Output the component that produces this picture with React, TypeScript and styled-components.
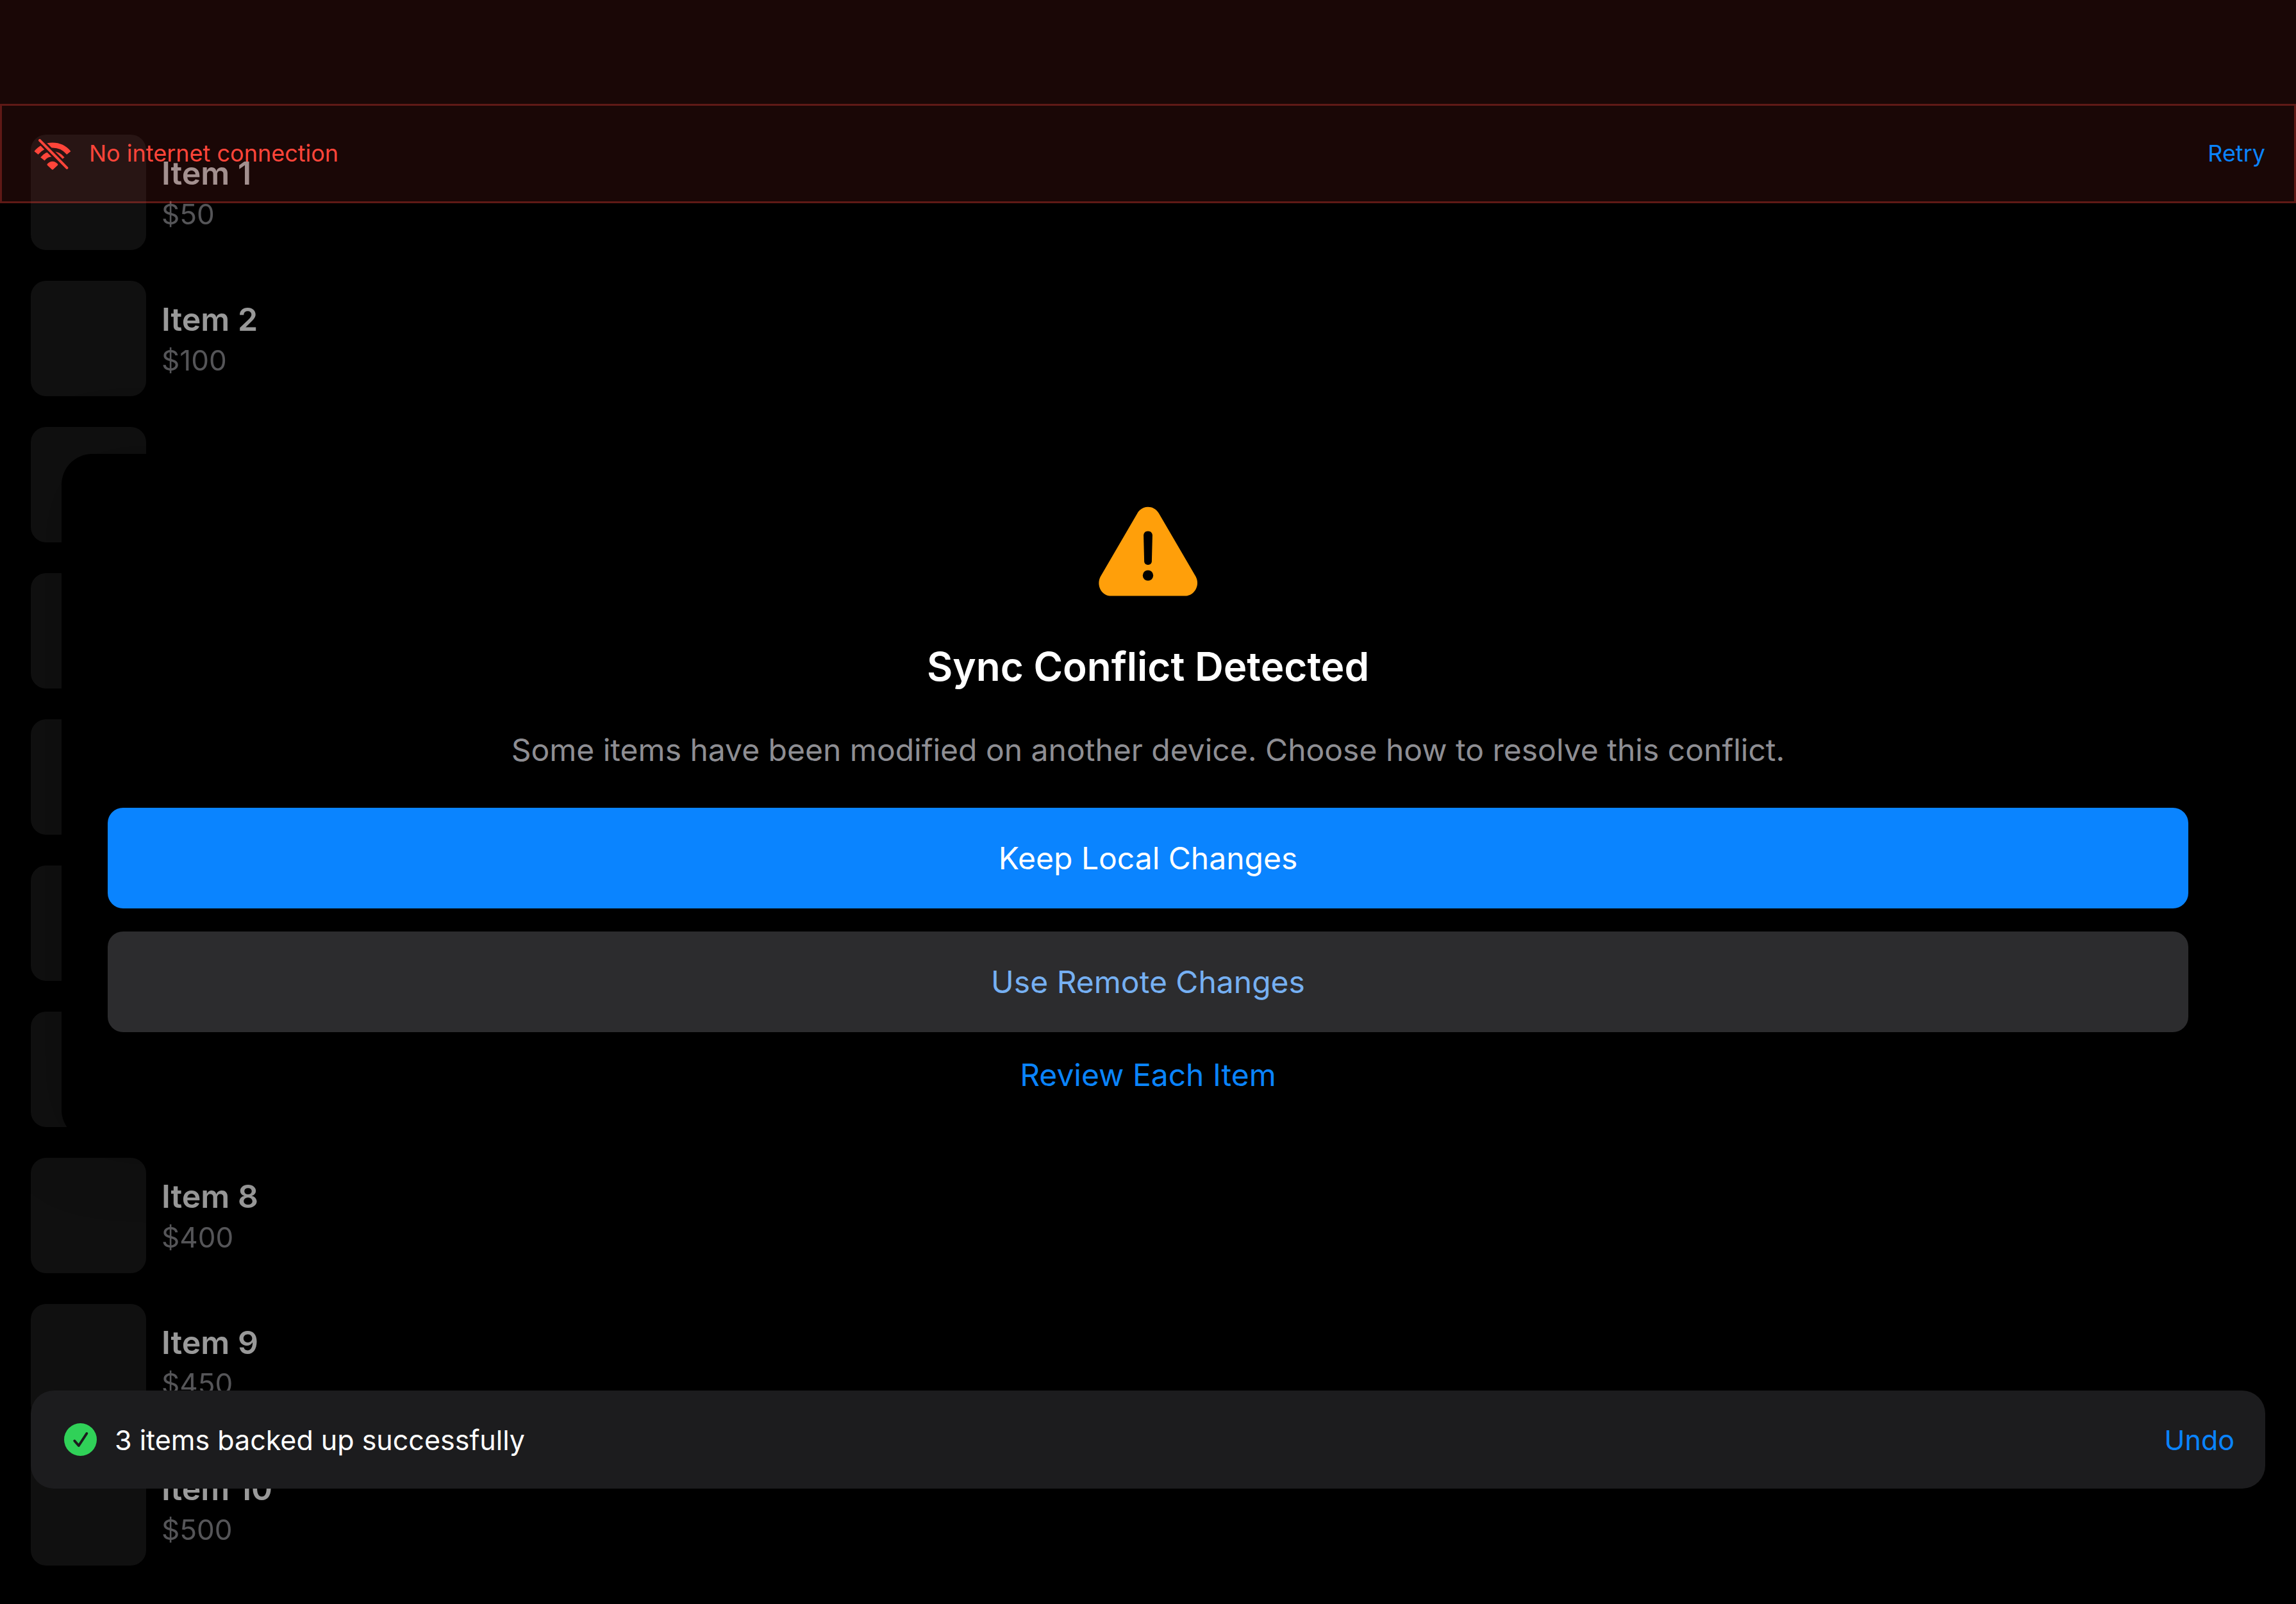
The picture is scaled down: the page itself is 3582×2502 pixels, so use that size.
import React from "react";
import styled, { createGlobalStyle } from "styled-components";

const color = {
  label: "#ffffff",
  secondary: "#8e8e93",
  placeholder: "#1c1c1c",
  fill: "#1c1c1e",
  fillRaised: "#2c2c2e",
  blue: "#0a84ff",
  blueSoft: "#76b0f2",
  red: "#ff453a",
  orange: "#ff9f0a",
  green: "#30d158",
};

const GlobalStyle = createGlobalStyle`
  * { box-sizing: border-box; }
  body {
    margin: 0;
    background: #000;
    color: ${color.label};
    font-family: Inter, "Liberation Sans", sans-serif;
  }
  button {
    margin: 0;
    padding: 0;
    border: 0;
    background: none;
    font: inherit;
    cursor: pointer;
  }
  h2, p, ul { margin: 0; padding: 0; }
  svg { display: block; flex: none; }
`;

const Page = styled.main`
  position: relative;
  min-height: 100vh;
  overflow: hidden;
`;

const ItemList = styled.ul`
  display: flex;
  flex-direction: column;
  gap: 48px;
  padding: 210px 48px 60px;
  list-style: none;
  opacity: 0.6;
`;

const ItemRow = styled.li`
  display: flex;
  align-items: center;
  gap: 24px;
`;

const Thumbnail = styled.div`
  width: 180px;
  height: 180px;
  border-radius: 24px;
  background: ${color.placeholder};
`;

const ItemText = styled.div`
  display: flex;
  flex-direction: column;
  gap: 6px;
`;

const ItemName = styled.p`
  font-size: 50px;
  line-height: 61px;
  font-weight: 600;
`;

const ItemPrice = styled.p`
  font-size: 44px;
  line-height: 54px;
  color: ${color.secondary};
`;

const OfflineBanner = styled.section`
  position: absolute;
  top: 0;
  left: 0;
  right: 0;
  padding-top: 162px;
  background: rgba(255, 69, 58, 0.1);
`;

const BannerRow = styled.div`
  display: flex;
  align-items: center;
  gap: 24px;
  padding: 45px;
  border: 3px solid rgba(255, 69, 58, 0.3);
  font-size: 36px;
  line-height: 45px;
  color: ${color.red};
`;

const RowLabel = styled.p`
  flex: 1;
`;

const LinkButton = styled.button`
  color: ${color.blue};
`;

const DialogLayer = styled.div`
  position: absolute;
  inset: 0;
  display: flex;
  align-items: center;
  padding: 0 96px 15px;
`;

const Dialog = styled.section`
  flex: 1;
  display: flex;
  flex-direction: column;
  align-items: center;
  gap: 60px;
  padding: 72px;
  border-radius: 48px;
  background: #000;
  box-shadow: 0 12px 120px rgba(0, 0, 0, 0.2);
`;

const DialogTitle = styled.h2`
  font-size: 62px;
  line-height: 79px;
  font-weight: 600;
`;

const DialogMessage = styled.p`
  font-size: 48px;
  line-height: 61px;
  color: ${color.secondary};
`;

const DialogActions = styled.div`
  align-self: stretch;
  display: flex;
  flex-direction: column;
  align-items: center;
  gap: 36px;
  font-size: 48px;
  line-height: 61px;
`;

const FilledButton = styled.button<{ $primary?: boolean }>`
  align-self: stretch;
  padding: 48px;
  border-radius: 24px;
  background: ${(p) => (p.$primary ? color.blue : color.fillRaised)};
  color: ${(p) => (p.$primary ? color.label : color.blueSoft)};
`;

const Toast = styled.section`
  position: absolute;
  left: 48px;
  right: 48px;
  bottom: 180px;
  display: flex;
  align-items: center;
  gap: 24px;
  padding: 48px;
  border-radius: 36px;
  background: ${color.fill};
  font-size: 43px;
  line-height: 54px;
`;

const WifiSlashIcon = () => (
  <svg width="67" height="59" viewBox="0 0 67 59" aria-hidden="true">
    <mask id="slash-gap" maskUnits="userSpaceOnUse" x="0" y="0" width="67" height="59">
      <rect width="67" height="59" fill="#fff" />
      <path d="M9 3.800 L61.400 56.800" stroke="#000" strokeWidth="10" />
    </mask>
    <g mask="url(#slash-gap)" fill="none" stroke={color.red} strokeWidth="8">
      <path d="M8.500 28.500 A33 33 0 0 1 59.300 28.500" />
      <path d="M18.400 38 A19.400 19.400 0 0 1 49.400 38" />
    </g>
    <path
      d="M26 45.600 C30.400 40.400 37.400 40.400 41.800 45.600 Q42.900 46.900 41.700 48 L35.200 54.100 Q33.900 55.200 32.600 54.100 L26.100 48 Q24.900 46.900 26 45.600 Z"
      fill={color.red}
    />
    <path d="M14 8.800 L56.400 51.800" stroke={color.red} strokeWidth="4" strokeLinecap="round" />
  </svg>
);

const WarningIcon = () => (
  <svg width="160" height="160" viewBox="0 0 160 160" aria-hidden="true">
    <path
      d="M63.500 20.500 C71 7.500 89 7.500 96.800 20.500 L154.600 119.500 C161.500 132.500 153 149.600 137.500 149.600 H22.500 C7 149.600 -1 132.500 5.800 119.500 Z"
      fill={color.orange}
    />
    <path
      d="M80 48.500 C84.200 48.500 87 51.300 86.900 55.500 L85.900 95.500 C85.800 98.900 83.400 101 80 101 C76.600 101 74.200 98.900 74.100 95.500 L73.100 55.500 C73 51.300 75.800 48.500 80 48.500 Z"
      fill="#000"
    />
    <circle cx="80" cy="117.600" r="8.200" fill="#000" />
  </svg>
);

const CheckIcon = () => (
  <svg width="59" height="57" viewBox="0 0 59 57" aria-hidden="true">
    <circle cx="29.500" cy="28.500" r="25.500" fill={color.green} />
    <path
      d="M20.300 30.500 L26.800 38 L39.300 19"
      fill="none"
      stroke={color.fill}
      strokeWidth="4"
      strokeLinecap="round"
      strokeLinejoin="round"
    />
  </svg>
);

const items = Array.from({ length: 10 }, (_, i) => ({
  name: `Item ${i + 1}`,
  price: `$${(i + 1) * 50}`,
}));

export default function App() {
  return (
    <Page>
      <GlobalStyle />
      <ItemList>
        {items.map((item) => (
          <ItemRow key={item.name}>
            <Thumbnail />
            <ItemText>
              <ItemName>{item.name}</ItemName>
              <ItemPrice>{item.price}</ItemPrice>
            </ItemText>
          </ItemRow>
        ))}
      </ItemList>

      <OfflineBanner role="status">
        <BannerRow>
          <WifiSlashIcon />
          <RowLabel>No internet connection</RowLabel>
          <LinkButton type="button">Retry</LinkButton>
        </BannerRow>
      </OfflineBanner>

      <DialogLayer>
        <Dialog role="alertdialog" aria-labelledby="conflict-title" aria-describedby="conflict-message">
          <WarningIcon />
          <DialogTitle id="conflict-title">Sync Conflict Detected</DialogTitle>
          <DialogMessage id="conflict-message">
            Some items have been modified on another device. Choose how to resolve this conflict.
          </DialogMessage>
          <DialogActions>
            <FilledButton type="button" $primary>
              Keep Local Changes
            </FilledButton>
            <FilledButton type="button">Use Remote Changes</FilledButton>
            <LinkButton type="button">Review Each Item</LinkButton>
          </DialogActions>
        </Dialog>
      </DialogLayer>

      <Toast role="status">
        <CheckIcon />
        <RowLabel>3 items backed up successfully</RowLabel>
        <LinkButton type="button">Undo</LinkButton>
      </Toast>
    </Page>
  );
}
